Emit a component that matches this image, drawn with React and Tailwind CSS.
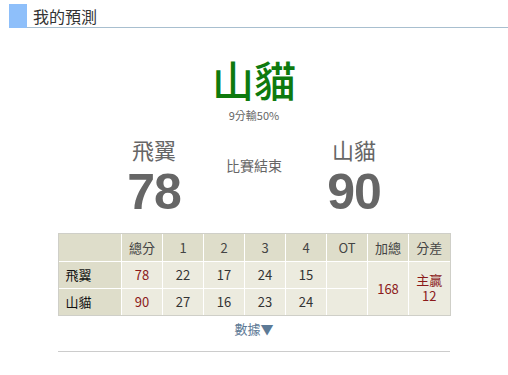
import React from "react";

const cjk = "font-['Noto_Sans_CJK_TC','Noto_Sans',sans-serif]";

export default function App() {
  const cellH = "h-[27px] text-center align-middle";
  return (
    <div className={`w-[508px] h-[375px] bg-white ${cjk} text-[#333]`}>
      {/* header */}
      <div className="flex items-stretch pt-[4px] pl-[9px]">
        <div className="w-[18px] h-[24px] bg-[#8ebffa]" />
        <div className="flex-1 border-b border-[#a8bfcf] h-[24px] flex items-center">
          <span className="pl-[6px] text-[16px] leading-[24px] text-[#333]">我的預測</span>
        </div>
      </div>

      {/* prediction */}
      <div className="mt-[27px] text-center text-[42px] leading-[48px] font-medium text-[#0e7a0e]">山貓</div>
      <div className="mt-[5px] text-center text-[11px] leading-[14px] text-[#666]">9分輸50%</div>

      {/* scores */}
      <div className="mt-[13px] flex justify-center">
        <div className="w-[100px] flex flex-col items-center">
          <div className="text-[22px] leading-[28px] text-[#666]">飛翼</div>
          <div className="mt-[5px] font-['Liberation_Sans',Arial,sans-serif] font-bold text-[50px] leading-[48px] tracking-[-1px] text-[#666]">78</div>
        </div>
        <div className="w-[100px] flex flex-col items-center pt-[21px]">
          <div className="text-[14px] leading-[18px] text-[#666]">比賽結束</div>
        </div>
        <div className="w-[100px] flex flex-col items-center">
          <div className="text-[22px] leading-[28px] text-[#666]">山貓</div>
          <div className="mt-[5px] font-['Liberation_Sans',Arial,sans-serif] font-bold text-[50px] leading-[48px] tracking-[-1px] text-[#666]">90</div>
        </div>
      </div>

      {/* table */}
      <div className="mt-[17px] mx-auto w-[393px] border border-[#cfcfc8] bg-white">
        <table className="w-full table-fixed border-collapse text-[13px]">
          <colgroup>
            <col className="w-[63px]" />
            <col /><col /><col /><col /><col /><col /><col /><col />
          </colgroup>
          <thead>
            <tr className="bg-[#deddca]">
              <th className={`${cellH} border-r border-b border-white font-normal`}></th>
              {["總分", "1", "2", "3", "4", "OT", "加總", "分差"].map((h, i) => (
                <th key={h} className={`${cellH} border-b border-white font-normal text-[#444] ${i < 7 ? "border-r" : ""}`}>{h}</th>
              ))}
            </tr>
          </thead>
          <tbody>
            <tr>
              <td className={`h-[27px] pl-[7px] text-left bg-[#deddca] border-r border-b border-white text-[#111]`}>飛翼</td>
              <td className={`${cellH} bg-[#ecebdf] border-r border-b border-white text-[#8b1a1a]`}>78</td>
              {["22", "17", "24", "15", ""].map((v, i) => (
                <td key={i} className={`${cellH} bg-[#ecebdf] border-r border-b border-white`}>{v}</td>
              ))}
              <td rowSpan={2} className={`text-center align-middle bg-[#ecebdf] border-r border-white text-[#8b1a1a]`}>168</td>
              <td rowSpan={2} className={`text-center align-middle bg-[#ecebdf] text-[#8b1a1a] leading-[16px]`}>主贏<br />12</td>
            </tr>
            <tr>
              <td className={`h-[27px] pl-[7px] text-left bg-[#deddca] border-r border-white text-[#111]`}>山貓</td>
              <td className={`${cellH} bg-[#ecebdf] border-r border-white text-[#8b1a1a]`}>90</td>
              {["27", "16", "23", "24", ""].map((v, i) => (
                <td key={i} className={`${cellH} bg-[#ecebdf] border-r border-white`}>{v}</td>
              ))}
            </tr>
          </tbody>
        </table>
      </div>

      <div className="mt-[4px] text-center text-[13px] leading-[18px] text-[#5d7a96]">數據▼</div>
      <div className="mt-[13px] mx-auto w-[392px] border-t border-[#cccccc]" />
    </div>
  );
}
